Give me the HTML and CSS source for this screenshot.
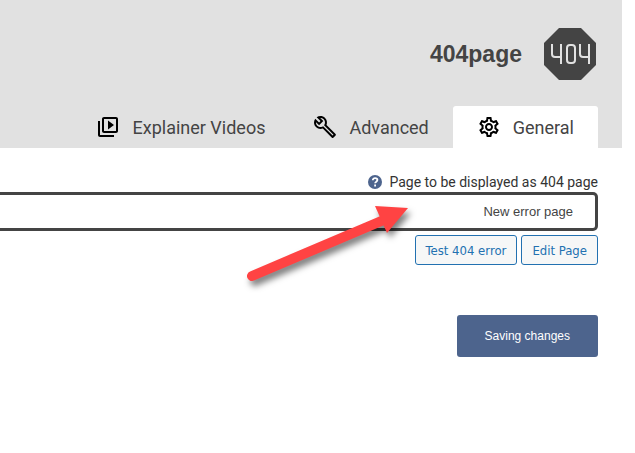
FILE: index.html
```html
<!DOCTYPE html>
<html lang="en">

<head>
    <meta charset="UTF-8">
    <meta name="viewport" content="width=device-width, initial-scale=1.0">
    <title>404page</title>
    <link rel="stylesheet" href="styles.css">
</head>

<body>
    <div class="page">
        <header class="header">
            <div class="brand">
                <h1>404page</h1>
                <svg class="logo" viewBox="0 0 52 52" aria-hidden="true">
                    <path d="M15 0h22l15 15v22L37 52H15L0 37V15z" fill="#444"/>
                    <g fill="none" stroke="#e1e1e1" stroke-width="2">
                        <path d="M8 16v10q0 3 3 3h7M17 16v20"/>
                        <rect x="23" y="17" width="8" height="18" rx="3"/>
                        <path d="M36 16v10q0 3 3 3h7M45 16v20"/>
                    </g>
                </svg>
            </div>
            <nav class="tabs">
                <a class="tab" href="#videos">
                    <svg class="icon" viewBox="0 0 24 24" aria-hidden="true">
                        <path d="M4 6H2v14c0 1.100.9 2 2 2h14v-2H4V6zm16-4H8c-1.100 0-2 .9-2 2v12c0 1.100.9 2 2 2h12c1.100 0 2-.9 2-2V4c0-1.100-.9-2-2-2zm0 14H8V4h12v12zM12 5.500v9l6-4.500z"/>
                    </svg>
                    <span>Explainer Videos</span>
                </a>
                <a class="tab" href="#advanced">
                    <svg class="icon" viewBox="0 0 24 24" aria-hidden="true">
                        <path d="M22.610 18.990l-9.080-9.080c.93-2.340.45-5.100-1.440-7C9.790.610 6.210.4 3.660 2.260L7.500 6.110 6.080 7.520 2.250 3.690C.39 6.230.6 9.820 2.900 12.110c1.860 1.860 4.570 2.350 6.890 1.480l9.110 9.110c.39.39 1.020.39 1.410 0l2.300-2.300c.4-.38.4-1.010 0-1.410zm-3 1.600l-9.460-9.460c-.61.45-1.290.72-2 .82-1.360.2-2.790-.21-3.830-1.250C3.370 9.760 2.930 8.500 3 7.260l3.090 3.090 4.240-4.240-3.090-3.090c1.240-.07 2.490.37 3.440 1.310 1.080 1.080 1.490 2.570 1.240 3.960-.12.71-.42 1.370-.88 1.960l9.450 9.450-.88.890z"/>
                    </svg>
                    <span>Advanced</span>
                </a>
                <a class="tab active" href="#general">
                    <svg class="icon" viewBox="0 0 24 24" aria-hidden="true">
                        <path d="M19.430 12.980c.04-.32.07-.64.07-.98s-.03-.66-.07-.98l2.110-1.650c.19-.15.24-.42.12-.64l-2-3.460c-.09-.16-.26-.25-.44-.25-.06 0-.12.010-.17.030l-2.490 1c-.52-.4-1.080-.73-1.690-.98l-.38-2.650C14.460 2.180 14.250 2 14 2h-4c-.25 0-.46.18-.49.42l-.38 2.650c-.61.25-1.170.59-1.690.98l-2.490-1c-.06-.02-.12-.03-.18-.03-.17 0-.34.09-.43.25l-2 3.460c-.13.22-.07.49.12.64l2.110 1.650c-.04.32-.07.65-.07.98s.03.66.07.98l-2.110 1.650c-.19.15-.24.42-.12.64l2 3.460c.09.16.26.25.44.25.06 0 .12-.01.17-.03l2.490-1c.52.4 1.080.73 1.690.98l.38 2.650c.03.24.24.42.49.42h4c.25 0 .46-.18.49-.42l.38-2.650c.61-.25 1.170-.59 1.690-.98l2.490 1c.06.02.12.03.18.03.17 0 .34-.09.43-.25l2-3.460c.12-.22.07-.49-.12-.64l-2.110-1.650zm-1.980-1.710c.04.31.05.52.05.73s-.02.43-.05.73l-.14 1.130.89.7 1.080.84-.7 1.210-1.270-.51-1.040-.42-.9.68c-.43.32-.84.56-1.250.73l-1.060.43-.16 1.130-.2 1.350h-1.400l-.19-1.350-.16-1.130-1.060-.43c-.43-.18-.83-.41-1.230-.71l-.91-.7-1.060.43-1.270.51-.7-1.210 1.080-.84.89-.7-.14-1.130c-.03-.31-.05-.54-.05-.74s.02-.43.05-.73l.14-1.130-.89-.7-1.080-.84.7-1.210 1.270.51 1.040.42.9-.68c.43-.32.84-.56 1.250-.73l1.060-.43.16-1.130.2-1.350h1.390l.19 1.350.16 1.130 1.060.43c.43.18.83.41 1.230.71l.91.7 1.060-.43 1.270-.51.7 1.210-1.070.85-.89.7.14 1.130zM12 8c-2.210 0-4 1.790-4 4s1.790 4 4 4 4-1.790 4-4-1.790-4-4-4zm0 6c-1.100 0-2-.9-2-2s.9-2 2-2 2 .9 2 2-.9 2-2 2z"/>
                    </svg>
                    <span>General</span>
                </a>
            </nav>
        </header>

        <form class="settings" id="general" action="#">
            <div class="label-row">
                <svg class="help" viewBox="0 0 14 14" aria-hidden="true">
                    <circle cx="7" cy="7" r="7" fill="#4d648d"/>
                    <path d="M4.800 5.300c0-3 4.600-2.700 4.600-.2 0 1.600-2.300 1.500-2.300 3.200M7.100 9.600v1.800" fill="none" stroke="#fff" stroke-width="1.800"/>
                </svg>
                <label for="errorPage">Page to be displayed as 404 page</label>
            </div>
            <div class="field">
                <select id="errorPage" name="errorPage">
                    <option>New error page</option>
                </select>
                <svg class="arrow" viewBox="0 0 180 96" aria-hidden="true">
                    <path d="M14 80L148 23" stroke="#ff4343" stroke-width="10" stroke-linecap="round"/>
                    <path d="M137 10L170 12L149 37z" fill="#ff4343"/>
                </svg>
            </div>
            <div class="actions">
                <button type="button" class="button">Test 404 error</button>
                <button type="button" class="button">Edit Page</button>
            </div>
            <button type="submit" class="save">Saving changes</button>
        </form>
    </div>
</body>

</html>
```
FILE: styles.css
```css
* {
    box-sizing: border-box;
}

body {
    margin: 0;
    background-color: #fff;
    color: #444;
    font-family: Roboto, Tahoma, sans-serif;
}

.page {
    margin-right: 13px;
}

.header {
    padding: 28px 24px 0 0;
    background-color: #e1e1e1;
}

.brand {
    display: flex;
    justify-content: flex-end;
    align-items: center;
    gap: 22px;
    padding-right: 2px;
}

.brand h1 {
    margin: 0;
    font-family: "Liberation Sans", Arial, sans-serif;
    font-size: 23px;
    line-height: 28px;
}

.logo {
    width: 52px;
    height: 52px;
}

.tabs {
    display: flex;
    justify-content: flex-end;
    margin-top: 26px;
}

.tab {
    display: flex;
    align-items: center;
    gap: 12px;
    height: 42px;
    padding: 0 24px;
    border-radius: 3px 3px 0 0;
    color: #444;
    font-size: 18px;
    text-decoration: none;
}

.tab.active {
    background-color: #fff;
}

.icon {
    width: 24px;
    height: 24px;
    fill: #000;
}

.settings {
    display: flex;
    flex-direction: column;
    align-items: flex-end;
    padding: 24px 24px 24px 0;
}

.label-row {
    display: flex;
    align-items: center;
    gap: 7px;
    color: #333;
    font-size: 14px;
    line-height: 20px;
}

.help {
    width: 14px;
    height: 14px;
}

.field {
    position: relative;
    width: 100%;
}

.field select {
    display: block;
    width: 100%;
    height: 39px;
    padding: 0 22px 0 0;
    appearance: none;
    background-color: #fff;
    border: 3px solid #444;
    border-left: none;
    border-radius: 0 5px 5px 0;
    color: #444;
    font-family: "Liberation Sans", Arial, sans-serif;
    font-size: 13px;
    text-align-last: right;
}

/* pointer drawn over the field */
.arrow {
    position: absolute;
    top: 4px;
    right: 180px;
    width: 180px;
    height: 96px;
    filter: drop-shadow(3px 5px 3px rgba(0, 0, 0, 0.5));
    pointer-events: none;
}

.actions {
    display: flex;
    gap: 4px;
    margin-top: 4px;
}

.button {
    height: 30px;
    padding: 0 10px;
    background-color: #f6f7f7;
    border: 1px solid #2271b1;
    border-radius: 3px;
    color: #2271b1;
    font-family: "DejaVu Sans Condensed", Tahoma, sans-serif;
    font-size: 13px;
    cursor: pointer;
}

.save {
    height: 42px;
    margin-top: 50px;
    padding: 0 28px;
    background-color: #4d648d;
    border: none;
    border-radius: 3px;
    color: #fff;
    font-family: "Liberation Sans", Arial, sans-serif;
    font-size: 12px;
    cursor: pointer;
}
```
